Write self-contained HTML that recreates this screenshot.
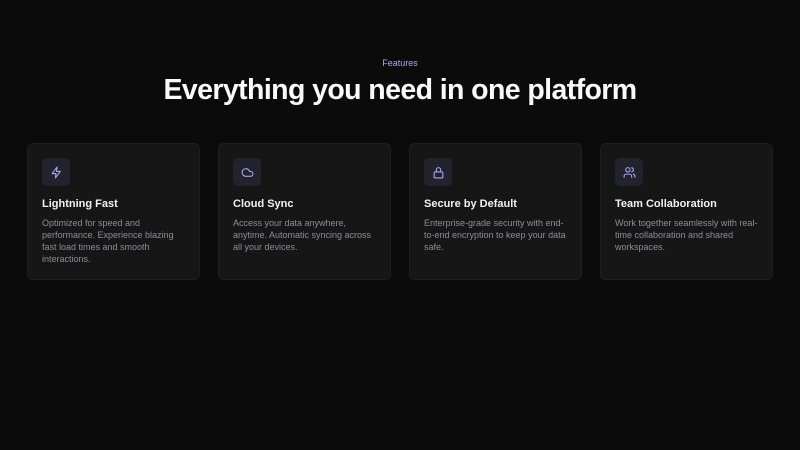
<!DOCTYPE html>
<html><head><style>
body{margin:0;width:800px;height:450px;background:#0b0b0c;font-family:"Liberation Sans",sans-serif;overflow:hidden;position:relative}
.tag{position:absolute;top:58px;left:0;width:800px;text-align:center;color:#a5a8f5;font-size:9px}
h1{position:absolute;top:72px;left:0;width:800px;margin:0;text-align:center;color:#fafafa;font-size:28.5px;font-weight:700;letter-spacing:-0.6px;line-height:36px}
.card{position:absolute;top:143px;width:171px;height:135px;background:#161617;border:1px solid #1f1f21;border-radius:6px}
.ic{position:absolute;left:14px;top:14px;width:28px;height:28px;background:#22232d;border-radius:5px;display:flex;align-items:center;justify-content:center}
.t{position:absolute;left:14px;top:54px;color:#f2f2f2;font-size:11px;font-weight:700}
.d{position:absolute;left:14px;top:73px;width:146px;color:#8e8e93;font-size:9px;line-height:12px}
svg{width:13px;height:13px;fill:none;stroke:#a5a8f5;stroke-width:2;stroke-linecap:round;stroke-linejoin:round}
</style></head><body>
<div class="tag">Features</div>
<h1>Everything you need in one platform</h1>
<div class="card" style="left:27px"><div class="ic"><svg viewBox="0 0 24 24"><path d="M13 2L4 14h7l-1 8 9-12h-7z"/></svg></div><div class="t">Lightning Fast</div><div class="d">Optimized for speed and<br>performance. Experience blazing fast load times and smooth interactions.</div></div>
<div class="card" style="left:218px"><div class="ic"><svg viewBox="0 0 24 24"><path d="M17.5 19H9a7 7 0 1 1 6.7-9h1.8a4.5 4.5 0 1 1 0 9z"/></svg></div><div class="t">Cloud Sync</div><div class="d">Access your data anywhere,<br>anytime. Automatic syncing across all your devices.</div></div>
<div class="card" style="left:409px"><div class="ic"><svg viewBox="0 0 24 24"><rect x="4" y="11" width="16" height="11" rx="2"/><path d="M8 11V7a4 4 0 0 1 8 0v4"/></svg></div><div class="t">Secure by Default</div><div class="d">Enterprise-grade security with end-<br>to-end encryption to keep your data safe.</div></div>
<div class="card" style="left:600px"><div class="ic"><svg viewBox="0 0 24 24"><path d="M16 21v-2a4 4 0 0 0-4-4H6a4 4 0 0 0-4 4v2"/><circle cx="9" cy="7" r="4"/><path d="M22 21v-2a4 4 0 0 0-3-3.9M16 3.1a4 4 0 0 1 0 7.8"/></svg></div><div class="t">Team Collaboration</div><div class="d">Work together seamlessly with real-<br>time collaboration and shared workspaces.</div></div>
</body></html>
